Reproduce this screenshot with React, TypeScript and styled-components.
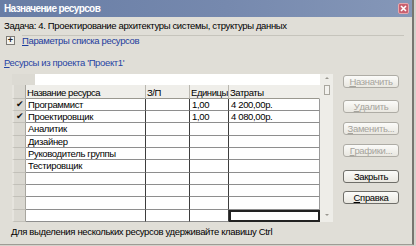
import React from "react";
import styled, { createGlobalStyle } from "styled-components";

const GlobalStyle = createGlobalStyle`
  html, body { margin: 0; padding: 0; background: #d4d2cb; }
  body {
    font-family: "Liberation Sans", Arial, sans-serif;
    font-size: 9.5px;
    letter-spacing: -0.35px;
    color: #000;
  }
  * { box-sizing: border-box; }
`;

const Window = styled.div`
  width: 414px;
  height: 245px;
  background: #e0ded7;
  border-right: 2px solid #77756f;
  border-bottom: 1px solid #9e9c95;
  display: flex;
  flex-direction: column;
  overflow: hidden;
`;

const TitleBar = styled.div`
  height: 17px;
  flex: none;
  display: flex;
  align-items: center;
  justify-content: space-between;
  padding: 0 3px 0 4px;
  background: linear-gradient(to right, #687da5 0%, #7689ae 55%, #8597b8 100%);
  color: #fff;
  font-weight: bold;
  font-size: 10px;
  letter-spacing: -0.6px;
`;

const CloseBtn = styled.div`
  width: 11px;
  height: 11px;
  border-radius: 2px;
  background: #c8606f;
  border: 1px solid #e7a7ae;
  display: flex;
  align-items: center;
  justify-content: center;
`;

const Body = styled.div`
  flex: 1;
  display: flex;
  flex-direction: column;
  padding: 0 0 0 4px;
`;

const TaskLine = styled.div`
  margin-top: 3px;
  height: 12px;
  line-height: 12px;
  white-space: nowrap;
`;

const ParamsRow = styled.div`
  margin-top: 3px;
  display: flex;
  align-items: flex-start;
  height: 11px;
`;

const PlusBox = styled.div`
  width: 9px;
  height: 9px;
  margin: 1px 0 0 2px;
  border: 1px solid #7d7b75;
  background: #f4f3ef;
  font-size: 9px;
  line-height: 7px;
  text-align: center;
  font-weight: bold;
  letter-spacing: 0;
  color: #222;
`;

const ParamsLink = styled.div`
  flex: 1;
  margin-left: 7px;
  margin-right: 8px;
  border-top: 1px solid #c6c4bc;
  color: #1d3c9c;
  line-height: 9px;
  white-space: nowrap;
`;

const Key = styled.span`
  text-decoration: underline;
`;

const ResLabel = styled.div`
  margin-top: 11px;
  height: 11px;
  line-height: 11px;
  color: #2744a4;
`;

const MainRow = styled.div`
  margin-top: 6px;
  display: flex;
  align-items: flex-start;
`;

const GridFrame = styled.div`
  margin-left: 8px;
  width: 321px;
  height: 148px;
  display: flex;
  background: #dcdad3;
`;

const GridMain = styled.div`
  flex: 1;
  display: flex;
  flex-direction: column;
`;

const EntryRow = styled.div`
  height: 11px;
  display: flex;
  padding-left: 23px;
`;

const EntryBox = styled.div`
  flex: 1;
  background: #fff;
`;

const Row = styled.div<{ $h: number }>`
  height: ${(p) => p.$h}px;
  display: grid;
  grid-template-columns: 14px 120px 44px 39px 91px;
`;

const IndCell = styled.div`
  background: #dad8d1;
  border-left: 2px solid #e6e4de;
  border-right: 1px solid #a8a69f;
  border-bottom: 1px solid #c2c0b9;
  font-size: 9px;
  line-height: 11px;
  padding-left: 2px;
  letter-spacing: 0;
  color: #111;
`;

const HeadCell = styled.div<{ $last?: boolean }>`
  background: #efeeea;
  border-right: 1px solid ${(p) => (p.$last ? "transparent" : "#b9b7b0")};
  border-bottom: 1px solid #9a9890;
  padding: 2px 0 0 1px;
  line-height: 11px;
  letter-spacing: -0.45px;
  white-space: nowrap;
  overflow: hidden;
`;

const Cell = styled.div<{ $dark?: boolean; $sel?: boolean }>`
  background: #fff;
  border-right: 1px solid ${(p) => (p.$dark ? "#3e3e3e" : "#9a9a9a")};
  border-bottom: 1px solid #8e8e8e;
  padding-left: 2px;
  line-height: 11px;
  white-space: nowrap;
  overflow: hidden;
  ${(p) => (p.$sel ? "outline: 2px solid #222; outline-offset: -2px; border-right-color: #222;" : "")}
`;

const ScrollBar = styled.div`
  width: 13px;
  background: #eeede8;
  display: flex;
  flex-direction: column;
  align-items: center;
`;

const ArrowUp = styled.div`
  margin-top: 3px;
  width: 0;
  height: 0;
  border-left: 2px solid transparent;
  border-right: 2px solid transparent;
  border-bottom: 2px solid #9a9890;
`;

const Thumb = styled.div`
  margin-top: 6px;
  width: 6px;
  height: 10px;
  border: 1px solid #a9a79f;
  background: #f3f2ee;
`;

const Spacer = styled.div`
  flex: 1;
`;

const ArrowDown = styled.div`
  margin-bottom: 6px;
  width: 0;
  height: 0;
  border-left: 2px solid transparent;
  border-right: 2px solid transparent;
  border-top: 2px solid #9a9890;
`;

const ButtonCol = styled.div`
  margin-left: 10px;
  width: 56px;
  display: flex;
  flex-direction: column;
`;

const Btn = styled.div<{ $disabled?: boolean; $mt: number }>`
  margin-top: ${(p) => p.$mt}px;
  height: 13px;
  border-radius: 3px;
  border: 1px solid ${(p) => (p.$disabled ? "#aeaca5" : "#6f6e69")};
  background: linear-gradient(#fbfbf9, #e9e7e0);
  color: ${(p) => (p.$disabled ? "#a6a49d" : "#000")};
  display: flex;
  align-items: center;
  justify-content: center;
  white-space: nowrap;
`;

const Hint = styled.div`
  margin-top: 4px;
  margin-left: 7px;
  height: 12px;
  line-height: 12px;
  white-space: nowrap;
`;

type R = { check?: boolean; name?: string; units?: string; cost?: string };
const rows: R[] = [
  { check: true, name: "Программист", units: "1,00", cost: "4 200,00р." },
  { check: true, name: "Проектировщик", units: "1,00", cost: "4 080,00р." },
  { name: "Аналитик" },
  { name: "Дизайнер" },
  { name: "Руководитель группы" },
  { name: "Тестировщик" },
  {},
  {},
  {},
  {},
];

export default function App() {
  return (
    <>
      <GlobalStyle />
      <Window>
        <TitleBar>
          <span>Назначение ресурсов</span>
          <CloseBtn>
            <svg width="7" height="7" viewBox="0 0 7 7">
              <path d="M1 1 L6 6 M6 1 L1 6" stroke="#fff" strokeWidth="1.6" />
            </svg>
          </CloseBtn>
        </TitleBar>
        <Body>
          <TaskLine>Задача: 4. Проектирование архитектуры системы, структуры данных</TaskLine>
          <ParamsRow>
            <PlusBox>+</PlusBox>
            <ParamsLink>
              <Key>П</Key>араметры списка ресурсов
            </ParamsLink>
          </ParamsRow>
          <ResLabel>
            <Key>Р</Key>есурсы из проекта 'Проект1'
          </ResLabel>
          <MainRow>
            <GridFrame>
              <GridMain>
                <EntryRow>
                  <EntryBox />
                </EntryRow>
                <Row $h={14}>
                  <IndCell />
                  <HeadCell>Название ресурса</HeadCell>
                  <HeadCell>З/П</HeadCell>
                  <HeadCell>Единицы</HeadCell>
                  <HeadCell $last>Затраты</HeadCell>
                </Row>
                {rows.map((r, i) => (
                  <Row key={i} $h={i % 3 === 2 ? 13 : 12}>
                    <IndCell>{r.check ? "✔" : ""}</IndCell>
                    <Cell $dark>{r.name}</Cell>
                    <Cell $dark />
                    <Cell $dark>{r.units}</Cell>
                    <Cell $sel={i === rows.length - 1}>{r.cost}</Cell>
                  </Row>
                ))}
              </GridMain>
              <ScrollBar>
                <ArrowUp />
                <Thumb />
                <Spacer />
                <ArrowDown />
              </ScrollBar>
            </GridFrame>
            <ButtonCol>
              <Btn $disabled $mt={1}>
                <Key>Н</Key>азначить
              </Btn>
              <Btn $disabled $mt={12}>
                <Key>У</Key>далить
              </Btn>
              <Btn $disabled $mt={9}>
                <Key>З</Key>аменить...
              </Btn>
              <Btn $disabled $mt={9}>
                <Key>Г</Key>рафики...
              </Btn>
              <Btn $mt={13}>Закрыть</Btn>
              <Btn $mt={8}>
                <Key>С</Key>правка
              </Btn>
            </ButtonCol>
          </MainRow>
          <Hint>Для выделения нескольких ресурсов удерживайте клавишу Ctrl</Hint>
        </Body>
      </Window>
    </>
  );
}
